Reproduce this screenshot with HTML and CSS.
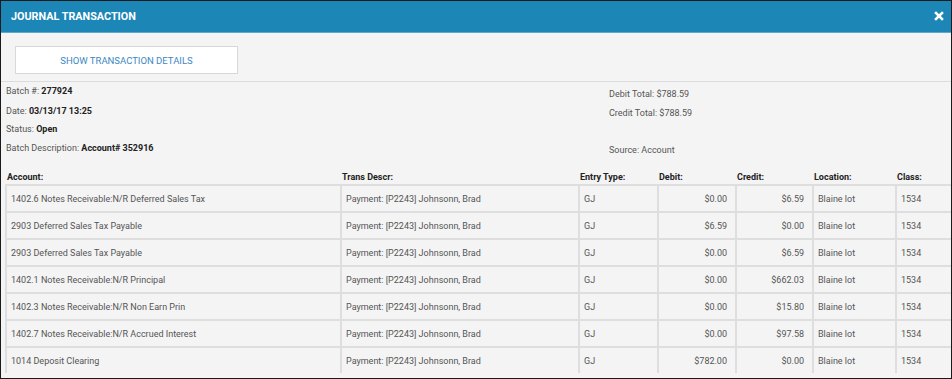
FILE: index.html
```html
<!DOCTYPE html>
<html lang="en">
<head>
  <meta charset="UTF-8" />
  <title>Journal Transaction</title>
  <link rel="stylesheet" href="styles.css">
</head>
<body>
  <div class="modal">
    <div class="modal-header">
      <h1>JOURNAL TRANSACTION</h1>
      <button class="close-btn" title="Close">
        <svg viewBox="0 0 10 10" fill="none" stroke="currentColor" stroke-width="2.6" stroke-linecap="square">
          <path d="M2 2L8 8"></path>
          <path d="M8 2L2 8"></path>
        </svg>
      </button>
    </div>

    <div class="toolbar">
      <button class="details-btn">SHOW TRANSACTION DETAILS</button>
    </div>

    <div class="summary">
      <div class="summary-col">
        <p>Batch #: <b>277924</b></p>
        <p>Date: <b>03/13/17 13:25</b></p>
        <p>Status: <b>Open</b></p>
        <p>Batch Description: <b>Account# 352916</b></p>
      </div>
      <div class="summary-col right">
        <p>Debit Total: $788.59</p>
        <p>Credit Total: $788.59</p>
        <p>&nbsp;</p>
        <p>Source: Account</p>
      </div>
    </div>

    <table class="entries">
      <colgroup>
        <col class="c-account">
        <col class="c-descr">
        <col class="c-type">
        <col class="c-debit">
        <col class="c-credit">
        <col class="c-location">
        <col class="c-class">
      </colgroup>
      <thead>
        <tr>
          <th>Account:</th>
          <th>Trans Descr:</th>
          <th>Entry Type:</th>
          <th>Debit:</th>
          <th>Credit:</th>
          <th>Location:</th>
          <th>Class:</th>
        </tr>
      </thead>
      <tbody>
        <tr>
          <td>1402.6 Notes Receivable:N/R Deferred Sales Tax</td>
          <td>Payment: [P2243] Johnsonn, Brad</td>
          <td>GJ</td>
          <td class="num">$0.00</td>
          <td class="num">$6.59</td>
          <td>Blaine lot</td>
          <td>1534</td>
        </tr>
        <tr>
          <td>2903 Deferred Sales Tax Payable</td>
          <td>Payment: [P2243] Johnsonn, Brad</td>
          <td>GJ</td>
          <td class="num">$6.59</td>
          <td class="num">$0.00</td>
          <td>Blaine lot</td>
          <td>1534</td>
        </tr>
        <tr>
          <td>2903 Deferred Sales Tax Payable</td>
          <td>Payment: [P2243] Johnsonn, Brad</td>
          <td>GJ</td>
          <td class="num">$0.00</td>
          <td class="num">$6.59</td>
          <td>Blaine lot</td>
          <td>1534</td>
        </tr>
        <tr>
          <td>1402.1 Notes Receivable:N/R Principal</td>
          <td>Payment: [P2243] Johnsonn, Brad</td>
          <td>GJ</td>
          <td class="num">$0.00</td>
          <td class="num">$662.03</td>
          <td>Blaine lot</td>
          <td>1534</td>
        </tr>
        <tr>
          <td>1402.3 Notes Receivable:N/R Non Earn Prin</td>
          <td>Payment: [P2243] Johnsonn, Brad</td>
          <td>GJ</td>
          <td class="num">$0.00</td>
          <td class="num">$15.80</td>
          <td>Blaine lot</td>
          <td>1534</td>
        </tr>
        <tr>
          <td>1402.7 Notes Receivable:N/R Accrued Interest</td>
          <td>Payment: [P2243] Johnsonn, Brad</td>
          <td>GJ</td>
          <td class="num">$0.00</td>
          <td class="num">$97.58</td>
          <td>Blaine lot</td>
          <td>1534</td>
        </tr>
        <tr>
          <td>1014 Deposit Clearing</td>
          <td>Payment: [P2243] Johnsonn, Brad</td>
          <td>GJ</td>
          <td class="num">$782.00</td>
          <td class="num">$0.00</td>
          <td>Blaine lot</td>
          <td>1534</td>
        </tr>
      </tbody>
    </table>
  </div>
</body>
</html>
```

FILE: styles.css
```css
:root {
  --header-bg: #1c86b7;
  --header-line: #5aa9d0;
  --body-bg: #f4f4f4;
  --line-color: #dedede;
  --text-primary: #222222;
  --text-secondary: #555555;
  --link-color: #3b88c3;
}

body {
  margin: 0;
  font-family: Roboto, 'Liberation Sans', sans-serif;
  color: var(--text-secondary);
}

.modal {
  width: 952px;
  height: 379px;
  box-sizing: border-box;
  border: 1px solid #1a1a1a;
  background: var(--body-bg);
  overflow: hidden;
}

.modal-header {
  height: 32px;
  background: var(--header-bg);
  border-bottom: 1px solid var(--header-line);
  display: flex;
  align-items: center;
  justify-content: space-between;
  padding: 0 7px 0 10px;
  margin-top: -1px;
}

h1 {
  margin: 0;
  font-size: 10.8px;
  font-weight: 700;
  color: #ffffff;
}

.close-btn {
  background: none;
  border: none;
  padding: 0;
  color: #ffffff;
  width: 10px;
  height: 10px;
  cursor: pointer;
  display: flex;
}

.close-btn svg {
  width: 10px;
  height: 10px;
}

.toolbar {
  padding: 13px 14px 7px;
  border-bottom: 1px solid #dcdcdc;
}

.details-btn {
  width: 223px;
  height: 28px;
  background: #ffffff;
  border: 1px solid #d8d8d8;
  color: var(--link-color);
  font-family: Roboto, 'Liberation Sans', sans-serif;
  font-size: 9.5px;
  cursor: pointer;
}

.summary {
  display: flex;
  padding: 0 5px;
  height: 88px;
}

.summary-col {
  flex: 0 0 603px;
}

.summary-col.right {
  flex: 1;
  padding-top: 3px;
}

.summary p {
  margin: 0;
  font-size: 9px;
  line-height: 18.5px;
}

.summary p:first-child {
  line-height: 19.5px;
}

.summary-col.right p:first-child {
  line-height: 18.5px;
}

.summary b {
  color: var(--text-primary);
}

.entries {
  width: 946px;
  margin-left: 4px;
  border-collapse: collapse;
  table-layout: fixed;
  font-size: 9px;
}

.c-account { width: 335px; }
.c-descr { width: 238px; }
.c-type { width: 79px; }
.c-debit { width: 78px; }
.c-credit { width: 77px; }
.c-location { width: 83px; }
.c-class { width: 56px; }

.entries th {
  text-align: left;
  font-weight: 700;
  color: var(--text-primary);
  padding: 0 1px 1px;
  height: 13px;
}

.entries td {
  height: 25px;
  padding: 0 4px;
  border: 2px solid var(--line-color);
  white-space: nowrap;
}

.entries tr:last-child td {
  border-bottom: none;
}

.entries td:last-child {
  border-right: none;
}

.entries td.num {
  text-align: right;
  padding-right: 8px;
}
```
